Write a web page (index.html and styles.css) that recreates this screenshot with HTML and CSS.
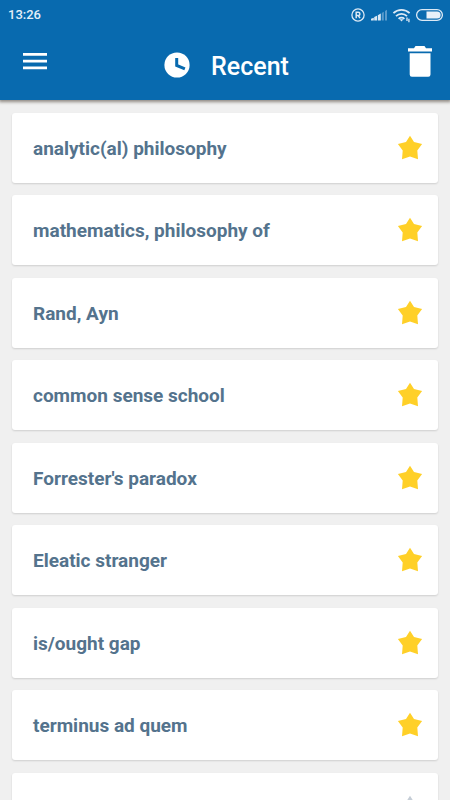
FILE: index.html
```html
<!DOCTYPE html>
<html lang="en">
<head>
<meta charset="utf-8">
<meta name="viewport" content="width=device-width, initial-scale=1">
<title>Recent</title>
<link rel="stylesheet" href="styles.css">
</head>
<body>
<svg class="defs" aria-hidden="true">
  <symbol id="star" viewBox="0 0 26 26"><path d="M13 .8l4 6.2 8.1 1.9-4.8 6.6.7 8.8-8-2.9-8 2.9.7-8.8L.9 8.9 9 7z"/></symbol>
</svg>
<header class="header">
  <div class="status">
    <time class="clock">13:26</time>
    <svg class="indicators" width="94" height="16" viewBox="0 0 94 16" aria-hidden="true">
      <circle cx="8" cy="8" r="6.1" fill="none" stroke="#dce9f5" stroke-width="1.3"/>
      <path d="M6.2 11.2V5.3h2.1a1.5 1.5 0 0 1 0 3.2H6.2M8.2 8.5L10 11.2" fill="none" stroke="#dce9f5" stroke-width="1.5"/>
      <path d="M21 13.5v-1.8l2.8-1v2.8zM24.2 13.5v-3.4l2.8-1.3v4.7zM27.8 13.5V8.2l3-1.6v6.9z" fill="#dce9f5"/>
      <path d="M31.8 13.5V6l2-1.2v8.7zM35 13.5V4l2-1.2v10.7z" fill="#5b9bcc"/>
      <g fill="none" stroke="#dce9f5" stroke-width="1.8">
        <path d="M43.4 6.2a11.5 11.5 0 0 1 16.2 0M46 9.1a7.8 7.8 0 0 1 11 0M48.6 11.8a4.1 4.1 0 0 1 5.8 0"/>
      </g>
      <path d="M49.5 12.2h4L51.5 14.4z" fill="#dce9f5"/>
      <path d="M57 10.6v3.4M58.9 11.8v3.4" stroke="#c5dbee" stroke-width="1.5"/>
      <rect x="66.6" y="2.6" width="25.8" height="10.8" rx="5.4" fill="none" stroke="#dce9f5" stroke-width="1.3"/>
      <path d="M76.5 4.5h10.6a3.5 3.5 0 0 1 0 7H76.5z" fill="#e8f1f9"/>
    </svg>
  </div>
  <div class="toolbar">
    <button class="icon-button" type="button" aria-label="Menu">
      <svg width="24" height="17" viewBox="0 0 24 17"><path d="M0 0h24v2.7H0zM0 6.7h24v2.7H0zM0 13.5h24v2.7H0z" fill="#fff"/></svg>
    </button>
    <div class="heading">
      <svg width="26" height="26" viewBox="0 0 26 26" aria-hidden="true"><circle cx="13" cy="13" r="12.6" fill="#fff"/><path d="M12.7 6v7.4l8.2 3.4" fill="none" stroke="#086aaf" stroke-width="3"/></svg>
      <h1 class="title">Recent</h1>
    </div>
    <button class="icon-button trash" type="button" aria-label="Clear recent">
      <svg width="24" height="31" viewBox="0 0 24 31"><path d="M0 2.2h6L7.5 0h9L18 2.2h6v3.3H0zM1.7 7.3h20.8v21.2a2.2 2.2 0 0 1-2.2 2.2H3.9a2.2 2.2 0 0 1-2.2-2.2z" fill="#fff"/></svg>
    </button>
  </div>
</header>
<main class="content">
  <ul class="list">
    <li class="card"><a class="term" href="#">analytic(al) philosophy</a><button class="star" type="button" aria-label="Favourite"><svg width="26" height="26"><use href="#star"/></svg></button></li>
    <li class="card"><a class="term" href="#">mathematics, philosophy of</a><button class="star" type="button" aria-label="Favourite"><svg width="26" height="26"><use href="#star"/></svg></button></li>
    <li class="card"><a class="term" href="#">Rand, Ayn</a><button class="star" type="button" aria-label="Favourite"><svg width="26" height="26"><use href="#star"/></svg></button></li>
    <li class="card"><a class="term" href="#">common sense school</a><button class="star" type="button" aria-label="Favourite"><svg width="26" height="26"><use href="#star"/></svg></button></li>
    <li class="card"><a class="term" href="#">Forrester's paradox</a><button class="star" type="button" aria-label="Favourite"><svg width="26" height="26"><use href="#star"/></svg></button></li>
    <li class="card"><a class="term" href="#">Eleatic stranger</a><button class="star" type="button" aria-label="Favourite"><svg width="26" height="26"><use href="#star"/></svg></button></li>
    <li class="card"><a class="term" href="#">is/ought gap</a><button class="star" type="button" aria-label="Favourite"><svg width="26" height="26"><use href="#star"/></svg></button></li>
    <li class="card"><a class="term" href="#">terminus ad quem</a><button class="star" type="button" aria-label="Favourite"><svg width="26" height="26"><use href="#star"/></svg></button></li>
    <li class="card"><button class="star star-off" type="button" aria-label="Favourite"><svg width="26" height="26"><use href="#star"/></svg></button></li>
  </ul>
</main>
</body>
</html>
```
FILE: styles.css
```css
* {
  box-sizing: border-box;
}

body {
  margin: 0;
  height: 100vh;
  display: flex;
  flex-direction: column;
  overflow: hidden;
  background: #f0f0f0;
  font-family: Roboto, "Liberation Sans", sans-serif;
}

button {
  margin: 0;
  padding: 0;
  border: 0;
  background: none;
  cursor: pointer;
}

svg {
  display: block;
}

.defs {
  display: none;
}

.header {
  z-index: 1;
  background: #086aaf;
  color: #fff;
  box-shadow: 0 1px 3px 1px rgba(80, 72, 60, 0.6);
}

.status {
  display: flex;
  align-items: center;
  justify-content: space-between;
  height: 30px;
  padding: 0 6px 0 8px;
}

.clock {
  color: #e4eff8;
  font-size: 13px;
  font-weight: 500;
  line-height: 16px;
}

.toolbar {
  display: flex;
  align-items: center;
  justify-content: space-between;
  height: 70px;
  padding: 0 18px 8px 23px;
}

.heading {
  display: flex;
  align-items: center;
  gap: 21px;
  padding: 7px 2px 0 0;
}

.title {
  margin: 0;
  padding-top: 4px;
  font-size: 25px;
  font-weight: 500;
  line-height: 30px;
}

.content {
  flex: 1;
  min-height: 0;
  overflow: hidden;
}

.list {
  display: flex;
  flex-direction: column;
  gap: 12px;
  margin: 0;
  padding: 13px 12px 12px;
  list-style: none;
}

.card {
  display: flex;
  flex-shrink: 0;
  align-items: center;
  height: 70px;
  padding: 0 15px 0 21px;
  border-radius: 3px;
  background: #fff;
  box-shadow: 0 1px 2px rgba(0, 0, 0, 0.14);
}

.card:nth-child(even) {
  margin-bottom: 1px;
}

.term {
  padding-top: 2px;
  color: #54738d;
  font-size: 19px;
  font-weight: 700;
  line-height: 24px;
  text-decoration: none;
}

.star {
  margin-left: auto;
  color: #ffd028;
}

.star svg {
  fill: currentColor;
}

.star-off {
  color: #c5cdd6;
}
```
